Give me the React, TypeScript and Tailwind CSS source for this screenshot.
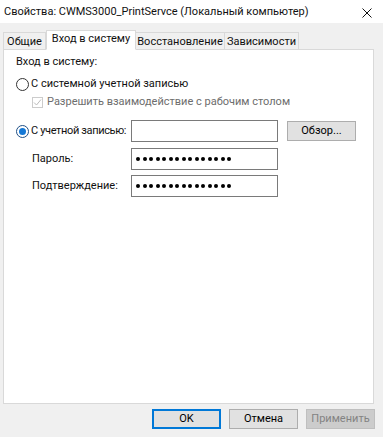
import React from 'react';

const tabs = [
  { label: 'Общие', width: 'w-[43px]', active: false },
  { label: 'Вход в систему', width: 'w-[90px]', active: true },
  { label: 'Восстановление', width: 'w-[90px]', active: false },
  { label: 'Зависимости', width: 'w-[75px]', active: false },
];

function Radio({ checked }: { checked?: boolean }) {
  return (
    <div
      className={`w-[13px] h-[13px] rounded-full border bg-white flex items-center justify-center shrink-0 ${
        checked ? 'border-[#1f4f86]' : 'border-[#333333]'
      }`}
    >
      {checked && <div className="w-[7px] h-[7px] rounded-full bg-[#1478d6]" />}
    </div>
  );
}

function PasswordDots() {
  return (
    <div className="flex items-center gap-[2.5px] pl-[4px]">
      {Array.from({ length: 15 }).map((_, i) => (
        <div key={i} className="w-[4px] h-[4px] rounded-full bg-black" />
      ))}
    </div>
  );
}

function Button({ children, variant = 'normal' }: { children: React.ReactNode; variant?: 'default' | 'normal' | 'disabled' }) {
  const styles = {
    default: 'border-2 border-[#0078d7] bg-[#e1e1e1] text-black',
    normal: 'border border-[#adadad] bg-[#e1e1e1] text-black',
    disabled: 'border border-[#bfbfbf] bg-[#cccccc] text-[#838383]',
  };
  return (
    <div className={`w-[69px] h-[20px] flex items-center justify-center ${styles[variant]}`}>
      {children}
    </div>
  );
}

export default function App() {
  return (
    <div
      className="w-[383px] h-[437px] bg-[#f0f0f0] flex flex-col text-[11px] text-[#111] overflow-hidden whitespace-nowrap"
      style={{ fontFamily: 'Roboto, "Noto Sans", sans-serif' }}
    >
      {/* Title bar */}
      <div className="h-[23px] bg-white flex items-center justify-between pl-[4px] pr-[11px] shrink-0">
        <span className="leading-none">Свойства: CWMS3000_PrintServce (Локальный компьютер)</span>
        <svg width="10" height="10" viewBox="0 0 10 10" className="mt-[2px]">
          <path d="M0.5 0.5 L9.5 9.5 M9.5 0.5 L0.5 9.5" stroke="#111" strokeWidth="1" fill="none" />
        </svg>
      </div>

      {/* Tabs */}
      <div className="h-[26px] flex items-end pl-[3px] shrink-0">
        {tabs.map((tab) => (
          <div
            key={tab.label}
            className={`${tab.width} flex items-center justify-center border border-[#d9d9d9] ${
              tab.active
                ? 'h-[20px] bg-white border-b-white -mb-[1px] relative z-10 pb-[2px]'
                : 'h-[17px] bg-[#f0f0f0] border-b-0 -ml-px first:ml-0 pt-[2px]'
            }`}
          >
            {tab.label}
          </div>
        ))}
      </div>

      {/* Panel */}
      <div className="ml-[3px] w-[371px] h-[355px] bg-white border border-[#d9d9d9] shrink-0 pt-[4px] pl-[12px]">
        <div className="h-[16px] leading-[16px]">Вход в систему:</div>

        <div className="mt-[7px] h-[14px] flex items-center gap-[2px]">
          <Radio />
          <span>С системной учетной записью</span>
        </div>

        <div className="mt-[4px] h-[14px] flex items-center gap-[4px] pl-[16px]">
          <div className="w-[11px] h-[11px] border border-[#cccccc] bg-white flex items-center justify-center">
            <svg width="9" height="9" viewBox="0 0 9 9">
              <path d="M1 4.5 L3.5 7 L8 1.5" stroke="#bcbcbc" strokeWidth="1" fill="none" />
            </svg>
          </div>
          <span className="text-[#6d6d6d]">Разрешить взаимодействие с рабочим столом</span>
        </div>

        <div className="mt-[11px] h-[22px] flex items-center">
          <div className="w-[115px] flex items-center gap-[2px]">
            <Radio checked />
            <span className="tracking-[-0.35px]">С учетной записью:</span>
          </div>
          <div className="w-[147px] h-[22px] border border-[#7a7a7a] bg-white" />
          <div className="ml-[9px]">
            <Button>Обзор...</Button>
          </div>
        </div>

        <div className="mt-[6px] h-[22px] flex items-center">
          <div className="w-[115px] pl-[16px]">Пароль:</div>
          <div className="w-[147px] h-[22px] border border-[#7a7a7a] bg-white flex items-center">
            <PasswordDots />
          </div>
        </div>

        <div className="mt-[5px] h-[22px] flex items-center">
          <div className="w-[115px] pl-[16px]">Подтверждение:</div>
          <div className="w-[147px] h-[22px] border border-[#7a7a7a] bg-white flex items-center">
            <PasswordDots />
          </div>
        </div>
      </div>

      {/* Dialog buttons */}
      <div className="mt-[5px] flex justify-end gap-[8px] pr-[8px]">
        <Button variant="default">OK</Button>
        <Button>Отмена</Button>
        <Button variant="disabled">Применить</Button>
      </div>
    </div>
  );
}
